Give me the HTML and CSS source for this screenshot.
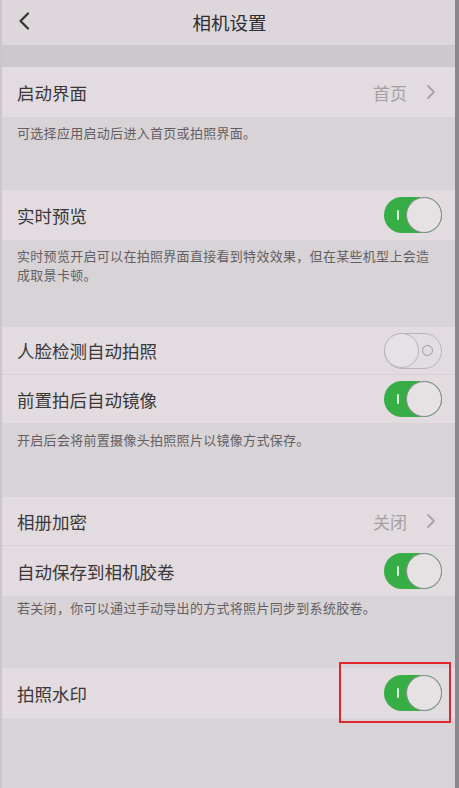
FILE: index.html
```html
<!DOCTYPE html>
<html lang="zh">
<head>
<meta charset="utf-8">
<link rel="stylesheet" href="styles.css">
</head>
<body>
<div class="screen">
  <header class="nav">
    <svg class="back" width="14" height="18" viewBox="0 0 14 18"><path d="M11 1.5 L3.5 9 L11 16.5" fill="none" stroke="#333" stroke-width="2.2" stroke-linecap="round" stroke-linejoin="round"/></svg>
    <div class="title">相机设置</div>
  </header>
  <div class="band"></div>

  <div class="row">
    <span class="label">启动界面</span>
    <span class="value">首页</span>
    <svg class="chev" width="12" height="16" viewBox="0 0 12 16"><path d="M3 2 L9 8 L3 14" fill="none" stroke="#a9a4a8" stroke-width="1.8" stroke-linecap="round" stroke-linejoin="round"/></svg>
  </div>
  <div class="desc d1">可选择应用启动后进入首页或拍照界面。</div>

  <div class="row">
    <span class="label">实时预览</span>
    <span class="toggle on"><span class="mark"></span><span class="knob"></span></span>
  </div>
  <div class="desc d2">实时预览开启可以在拍照界面直接看到特效效果，但在某些机型上会造成取景卡顿。</div>

  <div class="row r48 sep">
    <span class="label">人脸检测自动拍照</span>
    <span class="toggle off"><span class="knob"></span><span class="ring"></span></span>
  </div>
  <div class="row r48">
    <span class="label">前置拍后自动镜像</span>
    <span class="toggle on"><span class="mark"></span><span class="knob"></span></span>
  </div>
  <div class="desc d3">开启后会将前置摄像头拍照照片以镜像方式保存。</div>

  <div class="row r49 sep">
    <span class="label">相册加密</span>
    <span class="value">关闭</span>
    <svg class="chev" width="12" height="16" viewBox="0 0 12 16"><path d="M3 2 L9 8 L3 14" fill="none" stroke="#a9a4a8" stroke-width="1.8" stroke-linecap="round" stroke-linejoin="round"/></svg>
  </div>
  <div class="row">
    <span class="label">自动保存到相机胶卷</span>
    <span class="toggle on"><span class="mark"></span><span class="knob"></span></span>
  </div>
  <div class="desc d4">若关闭，你可以通过手动导出的方式将照片同步到系统胶卷。</div>

  <div class="row">
    <span class="label">拍照水印</span>
    <span class="toggle on"><span class="mark"></span><span class="knob"></span></span>
    <span class="highlight"></span>
  </div>
</div>
</body>
</html>
```
FILE: styles.css
```css
* { box-sizing: border-box; }
html, body { margin: 0; padding: 0; }
body {
  width: 459px;
  height: 788px;
  overflow: hidden;
  background: #d7d2d5;
  font-family: "Noto Sans CJK SC", "Noto Sans", sans-serif;
}
.screen {
  width: 459px;
  height: 788px;
  display: flex;
  flex-direction: column;
  border-right: 4px solid #8a8689;
  border-left: 2px solid #cbc6c9;
  background: #d8d3d6;
}
.nav {
  height: 45px;
  flex: none;
  background: #ddd7db;
  display: flex;
  align-items: center;
  position: relative;
}
.back { position: absolute; left: 15px; top: 12px; }
.title {
  flex: 1;
  text-align: center;
  font-size: 18.5px;
  color: #2e2c2e;
  padding-left: 2px;
  margin-top: -1px;
}
.band { height: 22px; flex: none; background: #cdc8cc; }
.row {
  height: 50px;
  flex: none;
  background: #e2dce0;
  display: flex;
  align-items: center;
  padding: 0 13px 0 15px;
  position: relative;
}
.row.r48 { height: 48px; }
.row.r49 { height: 49px; }
.row.sep { border-bottom: 1px solid #d6d0d4; }
.label {
  flex: 1;
  font-size: 17.5px;
  color: #3a3739;
}
.value {
  font-size: 17px;
  color: #a4a0a3;
  margin-right: 18px;
}
.chev { margin-right: 5px; }
.desc {
  flex: none;
  font-size: 13px;
  letter-spacing: 0.3px;
  line-height: 19px;
  color: #645f63;
  padding: 6px 20px 0 15px;
}
.d1 { height: 73px; padding-top: 6px; }
.d2 { height: 87px; padding-top: 6px; }
.d3 { height: 74px; padding-top: 7px; }
.d4 { height: 72px; padding-top: 2px; }
.toggle {
  width: 58px;
  height: 36px;
  border-radius: 18px;
  position: relative;
  flex: none;
}
.toggle.on { background: #37ad45; }
.toggle.off { background: #e2dde0; border: 1.5px solid #b9b4b7; }
.toggle .knob {
  position: absolute;
  top: 0;
  width: 36px;
  height: 36px;
  border-radius: 50%;
  background: #e6e2e4;
  border: 1.5px solid #8d8a8c;
}
.toggle.on .knob { right: 0; }
.toggle.off .knob { left: -1px; top: -1px; border-color: #b9b4b7; background: #e6e1e4; width: 35px; height: 35px; }
.toggle .mark {
  position: absolute;
  left: 13px;
  top: 13px;
  width: 2px;
  height: 10px;
  background: #d9efdb;
  border-radius: 1px;
}
.toggle .ring {
  position: absolute;
  right: 8px;
  top: 11px;
  width: 11px;
  height: 11px;
  border-radius: 50%;
  border: 1.5px solid #9e999c;
}
.highlight {
  position: absolute;
  left: 337px;
  top: -6px;
  width: 112px;
  height: 61px;
  border: 2.5px solid #e0262a;
  pointer-events: none;
}
```
